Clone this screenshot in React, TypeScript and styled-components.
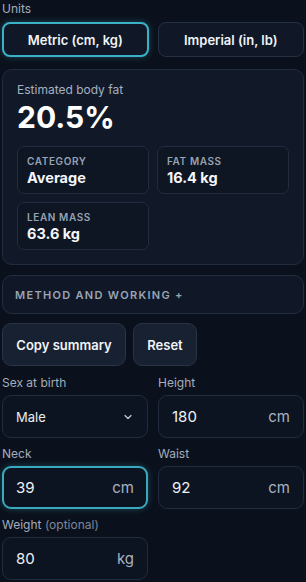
import React, { useState } from 'react';
import styled, { createGlobalStyle } from 'styled-components';

const GlobalStyle = createGlobalStyle`
    html, body {
        margin: 0;
        padding: 0;
        background: #0b111c;
        font-family: Inter, "Noto Sans", "Liberation Sans", sans-serif;
        color: #e8edf5;
    }
    * { box-sizing: border-box; }
`

const Page = styled.div`
    width: 306px;
    padding: 2px 2px 0 2px;
    display: flex;
    flex-direction: column;
`
const Label = styled.div`
    font-size: 12px;
    color: #a3adbd;
    height: 20px;
    line-height: 12px;
    padding-top: 1px;
`
const FieldLabel = styled(Label)`
    height: 19px;
    padding-top: 1px;
`
const LabelNote = styled.span`
    color: #7c8799;
`
const UnitRow = styled.div`
    display: grid;
    grid-template-columns: 1fr 1fr;
    gap: 9px;
    margin-bottom: 12px;
`
const UnitButton = styled.button<{ $active?: boolean }>`
    height: 35px;
    border-radius: 8px;
    background: #101827;
    border: ${p => p.$active ? '2px solid #3bb0c6' : '1px solid #253042'};
    box-shadow: ${p => p.$active ? '0 0 6px rgba(59,176,198,0.35)' : 'none'};
    color: #f1f4f8;
    font-family: inherit;
    font-size: 13px;
    font-weight: 600;
    cursor: pointer;
`
const Card = styled.div`
    background: #111928;
    border: 1px solid #222d3f;
    border-radius: 10px;
    padding: 13px 14px 14px 14px;
    margin-bottom: 10px;
`
const CardLabel = styled.div`
    font-size: 12px;
    color: #a6b0c0;
    line-height: 14px;
`
const BigValue = styled.div`
    font-size: 30px;
    font-weight: 700;
    color: #ffffff;
    line-height: 36px;
    margin-top: 2px;
    margin-bottom: 11px;
`
const StatGrid = styled.div`
    display: grid;
    grid-template-columns: 1fr 1fr;
    gap: 8px;
`
const StatBox = styled.div`
    background: #0e1523;
    border: 1px solid #222c3d;
    border-radius: 7px;
    padding: 8px 9px 7px 9px;
    height: 48px;
`
const StatTitle = styled.div`
    font-size: 10px;
    font-weight: 600;
    letter-spacing: 0.6px;
    color: #97a2b3;
    line-height: 12px;
`
const StatValue = styled.div`
    font-size: 14.5px;
    font-weight: 700;
    color: #f4f6fa;
    line-height: 20px;
    margin-top: 1px;
`
const MethodCard = styled.div`
    background: #101827;
    border: 1px solid #222d3f;
    border-radius: 10px;
    height: 39px;
    padding: 0 12px;
    display: flex;
    align-items: center;
    font-size: 11px;
    font-weight: 600;
    letter-spacing: 1.3px;
    color: #9aa4b5;
    margin-bottom: 9px;
`
const ActionRow = styled.div`
    display: flex;
    gap: 7px;
    margin-bottom: 10px;
`
const ActionButton = styled.button<{ $w: number }>`
    width: ${p => p.$w}px;
    height: 43px;
    background: #182131;
    border: 1px solid #283346;
    border-radius: 9px;
    color: #f1f4f8;
    font-family: inherit;
    font-size: 13px;
    font-weight: 600;
    cursor: pointer;
`
const FieldGrid = styled.div`
    display: grid;
    grid-template-columns: 146px 146px;
    column-gap: 10px;
    row-gap: 9px;
`
const Field = styled.div`
    display: flex;
    flex-direction: column;
`
const InputBox = styled.div<{ $focus?: boolean }>`
    height: 43px;
    border-radius: 9px;
    background: #0d1421;
    border: ${p => p.$focus ? '2px solid #3aa9bf' : '1px solid #222c3d'};
    box-shadow: ${p => p.$focus ? '0 0 6px rgba(58,169,191,0.35)' : 'none'};
    display: flex;
    align-items: center;
    padding: 0 ${p => p.$focus ? 12 : 13}px;
`
const InputValue = styled.div`
    flex: 1;
    font-size: 15px;
    color: #eef2f7;
`
const Unit = styled.div`
    font-size: 15px;
    color: #a9b2c0;
`
const SelectValue = styled.div`
    flex: 1;
    font-size: 13px;
    color: #e8ecf2;
`

const Chevron = () => (
    <svg width="12" height="12" viewBox="0 0 24 24" fill="none" stroke="#c4cbd6" strokeWidth="2.4" strokeLinecap="round" strokeLinejoin="round">
        <path d="M6 9l6 6 6-6" />
    </svg>
)

export default function App() {
    const [metric, setMetric] = useState(true);

    return <>
        <GlobalStyle />
        <Page>
            <Label>Units</Label>
            <UnitRow>
                <UnitButton $active={metric} onClick={() => setMetric(true)}>Metric (cm, kg)</UnitButton>
                <UnitButton $active={!metric} onClick={() => setMetric(false)}>Imperial (in, lb)</UnitButton>
            </UnitRow>

            <Card>
                <CardLabel>Estimated body fat</CardLabel>
                <BigValue>20.5%</BigValue>
                <StatGrid>
                    <StatBox>
                        <StatTitle>CATEGORY</StatTitle>
                        <StatValue>Average</StatValue>
                    </StatBox>
                    <StatBox>
                        <StatTitle>FAT MASS</StatTitle>
                        <StatValue>16.4 kg</StatValue>
                    </StatBox>
                    <StatBox>
                        <StatTitle>LEAN MASS</StatTitle>
                        <StatValue>63.6 kg</StatValue>
                    </StatBox>
                </StatGrid>
            </Card>

            <MethodCard>METHOD AND WORKING +</MethodCard>

            <ActionRow>
                <ActionButton $w={124}>Copy summary</ActionButton>
                <ActionButton $w={64}>Reset</ActionButton>
            </ActionRow>

            <FieldGrid>
                <Field>
                    <FieldLabel>Sex at birth</FieldLabel>
                    <InputBox>
                        <SelectValue>Male</SelectValue>
                        <Chevron />
                    </InputBox>
                </Field>
                <Field>
                    <FieldLabel>Height</FieldLabel>
                    <InputBox>
                        <InputValue>180</InputValue>
                        <Unit>cm</Unit>
                    </InputBox>
                </Field>
                <Field>
                    <FieldLabel>Neck</FieldLabel>
                    <InputBox $focus>
                        <InputValue>39</InputValue>
                        <Unit>cm</Unit>
                    </InputBox>
                </Field>
                <Field>
                    <FieldLabel>Waist</FieldLabel>
                    <InputBox>
                        <InputValue>92</InputValue>
                        <Unit>cm</Unit>
                    </InputBox>
                </Field>
                <Field>
                    <FieldLabel>Weight <LabelNote>(optional)</LabelNote></FieldLabel>
                    <InputBox>
                        <InputValue>80</InputValue>
                        <Unit>kg</Unit>
                    </InputBox>
                </Field>
            </FieldGrid>
        </Page>
    </>
}
